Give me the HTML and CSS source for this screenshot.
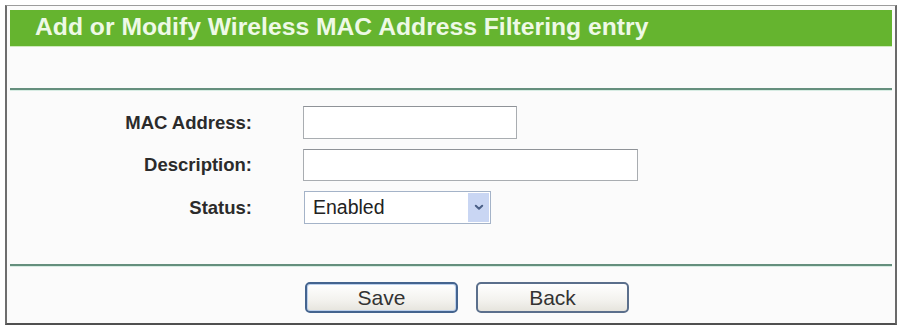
FILE: index.html
```html
<!DOCTYPE html>
<html>
<head>
<meta charset="utf-8">
<link rel="stylesheet" href="styles.css">
</head>
<body>
<div class="frame">
  <div class="header"><h1 class="title">Add or Modify Wireless MAC Address Filtering entry</h1></div>
  <div class="spacer"></div>
  <div class="rule"></div>
  <div class="form">
    <div class="row">
      <label class="label">MAC Address:</label>
      <input class="field field-mac" type="text">
    </div>
    <div class="row">
      <label class="label">Description:</label>
      <input class="field field-desc" type="text">
    </div>
    <div class="row">
      <label class="label">Status:</label>
      <div class="select">
        <span class="select-text">Enabled</span>
        <span class="select-arrow">
          <svg width="10" height="7" viewBox="0 0 10 7"><path d="M1.8 1.8 L5 4.8 L8.2 1.8" fill="none" stroke="#4a5f86" stroke-width="2" stroke-linecap="round" stroke-linejoin="round"/></svg>
        </span>
      </div>
    </div>
  </div>
  <div class="rule"></div>
  <div class="buttons">
    <button class="btn btn-default">Save</button>
    <button class="btn">Back</button>
  </div>
</div>
</body>
</html>
```
FILE: styles.css
```css
html, body {
  margin: 0;
  padding: 0;
  background: #ffffff;
  overflow: hidden;
}
body {
  font-family: "Liberation Sans", Arial, sans-serif;
}
.frame {
  margin: 5px 3px 0 5px;
  border-top: 1px solid #9c9c9c;
  border-left: 2px solid #6e6e6e;
  border-right: 2px solid #6a6a6a;
  border-bottom: 2px solid #505050;
  padding: 4px 3px 0 3px;
  background: #fbfbfb;
}
.header {
  height: 36px;
  background: #65b42f;
  border-bottom: 1px solid #cfe9bd;
  display: flex;
  align-items: center;
  padding-left: 25px;
}
.title {
  margin: 0;
  font-size: 24.7px;
  font-weight: bold;
  color: #eef9e6;
  line-height: 1;
  padding-bottom: 1px;
}
.spacer {
  height: 41px;
}
.rule {
  height: 2px;
  background: #658f7d;
  border-bottom: 1px solid #d7ece3;
}
.form {
  padding: 15px 0 40px 0;
  display: flex;
  flex-direction: column;
  gap: 10px;
}
.row {
  display: grid;
  grid-template-columns: 242px auto;
  column-gap: 51px;
  align-items: center;
}
.label {
  text-align: right;
  font-size: 18.5px;
  font-weight: bold;
  color: #2b2b2b;
}
.field {
  box-sizing: border-box;
  height: 33px;
  margin: 0;
  padding: 0 4px;
  border: 1px solid #a9adb1;
  border-top-color: #8f9398;
  background: #ffffff;
  font-family: "Liberation Sans", Arial, sans-serif;
  font-size: 19px;
}
.field-mac { width: 214px; }
.field-desc { width: 335px; height: 32px; }
.select {
  box-sizing: border-box;
  width: 187px;
  height: 33px;
  margin-left: 1px;
  border: 1px solid #a4b3c8;
  background: #ffffff;
  display: flex;
  align-items: stretch;
  padding: 1px;
}
.select-text {
  flex: 1;
  display: flex;
  align-items: center;
  padding-left: 7px;
  font-size: 19.5px;
  color: #222222;
}
.select-arrow {
  width: 21px;
  background: #c9d6f3;
  display: flex;
  align-items: center;
  justify-content: center;
}
.buttons {
  padding: 15px 0 10px 0;
  display: flex;
  gap: 18px;
  padding-left: 295px;
}
.btn {
  box-sizing: border-box;
  width: 153px;
  height: 31px;
  margin: 0;
  padding: 0;
  border: 2px solid #5b6f8c;
  border-radius: 5px;
  background: linear-gradient(#ffffff, #f3f2ee 60%, #e6e4dd);
  font-family: "Liberation Sans", Arial, sans-serif;
  font-size: 21px;
  color: #333333;
  line-height: 1;
}
.btn-default {
  border-color: #44648f;
  box-shadow: inset 0 0 0 1px #bcd0ec;
}
```
